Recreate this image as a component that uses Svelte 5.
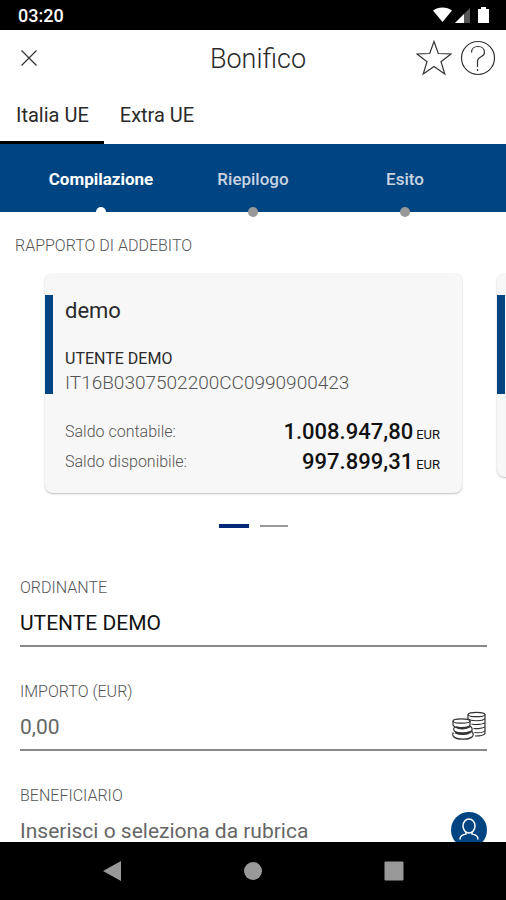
<script lang="ts">
  type Account = {
    name: string
    holder: string
    iban: string
    balances: { label: string; amount: string }[]
  }

  const tabs = ['Italia UE', 'Extra UE']
  const steps = ['Compilazione', 'Riepilogo', 'Esito']

  const accounts: (Account | null)[] = [
    {
      name: 'demo',
      holder: 'UTENTE DEMO',
      iban: 'IT16B0307502200CC0990900423',
      balances: [
        { label: 'Saldo contabile:', amount: '1.008.947,80' },
        { label: 'Saldo disponibile:', amount: '997.899,31' }
      ]
    },
    null
  ]

  let activeTab = $state(0)
  let activeStep = $state(0)
  let activeCard = $state(0)

  let payer = $state('UTENTE DEMO')
  let amount = $state('')
  let payee = $state('')
</script>

<div class="screen">
  <div class="status-bar">
    <span>03:20</span>
    <svg width="58" height="18" viewBox="0 0 58 18" aria-hidden="true">
      <path d="M1 4.500C6 .500 15 .500 20 4.500L10.500 16z" fill="#fff" />
      <path d="M23 17 38 2v15z" fill="#555" />
      <path d="M23 17 32 8v9z" fill="#fff" />
      <path d="M46 3h3V1h5v2h3v14H46z" fill="#fff" />
    </svg>
  </div>

  <main>
    <header>
      <button class="icon-btn close" aria-label="Chiudi">
        <svg width="18" height="18" viewBox="0 0 18 18">
          <path d="M1.500 1.500l15 15M16.500 1.500l-15 15" />
        </svg>
      </button>
      <h1>Bonifico</h1>
      <div class="actions">
        <button class="icon-btn" aria-label="Preferiti">
          <svg width="36" height="36" viewBox="0 0 36 36">
            <path d="M18 1.500 22.300 13.500 35 14 25 21.800 28.800 34 18 26.500 7.200 34 11 21.800 1 14 13.700 13.500z" />
          </svg>
        </button>
        <button class="icon-btn" aria-label="Aiuto">
          <svg width="36" height="36" viewBox="0 0 36 36">
            <circle cx="18" cy="18" r="16.500" />
            <path d="M11.500 12.500C11.500 9 14 6.500 18 6.500S24.500 9 24.500 12.500C24.500 17.500 17.500 16 17.500 21V27M17.500 29V31" />
          </svg>
        </button>
      </div>
    </header>

    <nav class="tabs">
      {#each tabs as tab, i}
        <button class:active={i === activeTab} onclick={() => (activeTab = i)}>{tab}</button>
      {/each}
    </nav>

    <ol class="stepper">
      {#each steps as step, i}
        <li class:active={i === activeStep}>{step}</li>
      {/each}
    </ol>

    <h2>RAPPORTO DI ADDEBITO</h2>

    <div class="carousel">
      {#each accounts as account}
        <article class="card" class:empty={!account}>
          {#if account}
            <h3>{account.name}</h3>
            <p class="holder">{account.holder}</p>
            <p class="iban">{account.iban}</p>
            <dl>
              {#each account.balances as balance}
                <div class="balance">
                  <dt>{balance.label}</dt>
                  <dd>
                    <span>{balance.amount}</span>
                    <small>EUR</small>
                  </dd>
                </div>
              {/each}
            </dl>
          {/if}
        </article>
      {/each}
    </div>

    <div class="pager">
      {#each accounts as _, i}
        <button
          class:active={i === activeCard}
          aria-label="Rapporto {i + 1}"
          onclick={() => (activeCard = i)}
        ></button>
      {/each}
    </div>

    <form>
      <div class="field">
        <label for="payer">ORDINANTE</label>
        <div class="control">
          <input id="payer" type="text" bind:value={payer} />
        </div>
      </div>

      <div class="field">
        <label for="amount">IMPORTO (EUR)</label>
        <div class="control">
          <input id="amount" type="text" inputmode="decimal" placeholder="0,00" bind:value={amount} />
          <button type="button" class="icon-btn" aria-label="Importo">
            <svg class="coins" width="36" height="32" viewBox="0 0 36 32">
              <ellipse cx="25.500" cy="4.500" rx="8.500" ry="2.200" />
              <path d="M17 4.500v5M34 4.500v19c-1 2-5 2.500-10 2.500M17 8.500c2 3 15 3 17 0M20.500 14c4 1 12 .500 13.500-1.500M22.500 18.500c4 .500 10 0 11.500-2M23.500 22.500c4 .500 9 0 10.500-2" />
              <ellipse cx="10.500" cy="11" rx="8.500" ry="2.200" />
              <path d="M2 11v4c1 3.500 16 3.500 17 0v-4M4 17c-2 1-1.500 3.500 0 4.500 3 2 14 2 17-1 .500-2 0-3.500-2.500-5M2.500 22.500c-1 1-1 3 0 4 3 3.500 16 3.500 19 0 1.500-2 .500-4-1-5.500" />
              <path class="shade" d="M5 17c3 2 10 2 14-.500M4 22.500c4 2.500 13 2 16-1" />
            </svg>
          </button>
        </div>
      </div>

      <div class="field">
        <label for="payee">BENEFICIARIO</label>
        <div class="control">
          <input id="payee" type="text" placeholder="Inserisci o seleziona da rubrica" bind:value={payee} />
          <button type="button" class="icon-btn contact" aria-label="Rubrica">
            <svg width="24" height="24" viewBox="0 0 24 24">
              <ellipse cx="12" cy="8" rx="6" ry="7" />
              <path d="M9 14v2C5.500 17 3 17.500 3 21.500M15 14v2C18.500 17 21 17.500 21 21.500" />
            </svg>
          </button>
        </div>
      </div>
    </form>
  </main>

  <div class="nav-bar">
    <button aria-label="Indietro">
      <svg width="20" height="20" viewBox="0 0 20 20"><path d="M1 10 19 0v20z" /></svg>
    </button>
    <button aria-label="Home">
      <svg width="20" height="20" viewBox="0 0 20 20"><circle cx="10" cy="10" r="9" /></svg>
    </button>
    <button aria-label="Recenti">
      <svg width="20" height="20" viewBox="0 0 20 20"><rect x=".500" y=".500" width="19" height="19" rx="1" /></svg>
    </button>
  </div>
</div>

<style>
  :global(body) {
    margin: 0;
    background: #fff;
  }
  .screen {
    display: flex;
    flex-direction: column;
    height: 100vh;
    font-family: Roboto, 'Liberation Sans', sans-serif;
    color: #2a2a2a;
  }
  h1, h2, h3, p, ol, dl, dd {
    margin: 0;
    padding: 0;
  }
  button {
    border: 0;
    padding: 0;
    background: none;
    font: inherit;
    color: inherit;
    cursor: pointer;
  }
  .status-bar {
    display: flex;
    flex-shrink: 0;
    align-items: center;
    justify-content: space-between;
    box-sizing: border-box;
    height: 30px;
    padding: 0 16px 0 18px;
    background: #000;
    color: #fff;
    font-size: 18px;
    font-weight: 500;
  }
  main {
    flex: 1;
    min-height: 0;
    overflow: hidden;
  }
  header {
    display: grid;
    grid-template-columns: 1fr auto 1fr;
    align-items: center;
    height: 56px;
    padding: 0 10px 0 20px;
  }
  h1 {
    padding-top: 2px;
    font-size: 27px;
    font-weight: 300;
  }
  .icon-btn {
    display: flex;
    align-items: center;
    justify-content: center;
    flex-shrink: 0;
  }
  .icon-btn svg {
    fill: none;
    stroke: #333;
    stroke-width: 1.2;
  }
  .close {
    justify-self: start;
  }
  .actions {
    display: flex;
    gap: 8px;
    justify-self: end;
  }
  .tabs {
    display: flex;
    height: 58px;
  }
  .tabs button {
    padding: 2px 15px 0 16px;
    border-bottom: 3px solid transparent;
    font-size: 20px;
  }
  .tabs button.active {
    border-bottom-color: #000;
  }
  .stepper {
    display: grid;
    grid-template-columns: repeat(3, 1fr);
    height: 68px;
    padding: 0 25px;
    background: #004481;
    list-style: none;
  }
  .stepper li {
    position: relative;
    height: 68px;
    color: #c8d4e2;
    font-size: 17px;
    font-weight: 500;
    line-height: 70px;
    text-align: center;
  }
  .stepper li.active {
    color: #fff;
    font-weight: 700;
  }
  .stepper li::after {
    content: '';
    position: absolute;
    left: calc(50% - 5px);
    bottom: -5px;
    width: 10px;
    height: 10px;
    border-radius: 50%;
    background: #999;
  }
  .stepper li.active::after {
    background: #fff;
  }
  h2 {
    padding: 24px 15px 17px;
    font-size: 16px;
    font-weight: 300;
    line-height: 20px;
    color: #555;
  }
  .carousel {
    display: flex;
    align-items: flex-start;
    gap: 35px;
    padding: 0 44px 4px 45px;
    overflow: hidden;
  }
  .card {
    position: relative;
    flex: 0 0 100%;
    box-sizing: border-box;
    padding: 24px 22px 16px 20px;
    border-radius: 8px;
    background: #f7f7f7;
    box-shadow: 0 1px 2px rgba(0, 0, 0, 0.25);
  }
  .card.empty {
    height: 204px;
  }
  .card::before {
    content: '';
    position: absolute;
    left: 0;
    top: 22px;
    width: 8px;
    height: 99px;
    background: #004481;
  }
  h3 {
    font-size: 22px;
    font-weight: 400;
    line-height: 28px;
  }
  .holder {
    margin-top: 22px;
    font-size: 16px;
    line-height: 24px;
  }
  .iban {
    font-size: 19px;
    font-weight: 300;
    line-height: 24px;
    color: #555;
  }
  dl {
    margin-top: 22px;
  }
  .balance {
    display: flex;
    justify-content: space-between;
    height: 30px;
    line-height: 30px;
  }
  dt {
    font-size: 16px;
    font-weight: 300;
    color: #555;
  }
  dd {
    display: flex;
    align-items: baseline;
    gap: 3px;
    color: #111;
    font-size: 22px;
    font-weight: 500;
  }
  small {
    font-size: 13px;
    font-weight: 400;
  }
  .pager {
    display: flex;
    align-items: center;
    justify-content: center;
    gap: 11px;
    height: 58px;
  }
  .pager button {
    width: 28px;
    height: 2px;
    background: #999;
  }
  .pager button.active {
    width: 30px;
    height: 4px;
    background: #002878;
  }
  form {
    display: flex;
    flex-direction: column;
    gap: 34px;
    padding: 22px 19px 0 20px;
  }
  label {
    display: block;
    font-size: 16px;
    font-weight: 300;
    line-height: 22px;
    color: #555;
  }
  .control {
    display: flex;
    align-items: center;
    height: 46px;
    border-bottom: 2px solid #888;
  }
  input {
    flex: 1;
    min-width: 0;
    padding: 2px 0 0;
    border: 0;
    outline: 0;
    background: none;
    font: 400 21px/28px Roboto, 'Liberation Sans', sans-serif;
    color: #111;
  }
  input::placeholder {
    color: #666;
  }
  .coins .shade {
    stroke-width: 2;
  }
  .contact {
    width: 36px;
    height: 36px;
    border-radius: 50%;
    background: #004481;
  }
  .contact svg {
    stroke: #fff;
    stroke-width: 1.5;
  }
  .nav-bar {
    display: flex;
    flex-shrink: 0;
    align-items: center;
    justify-content: space-around;
    height: 58px;
    padding: 0 42px;
    background: #000;
  }
  .nav-bar button {
    display: flex;
  }
  .nav-bar svg {
    fill: #999;
  }
</style>
